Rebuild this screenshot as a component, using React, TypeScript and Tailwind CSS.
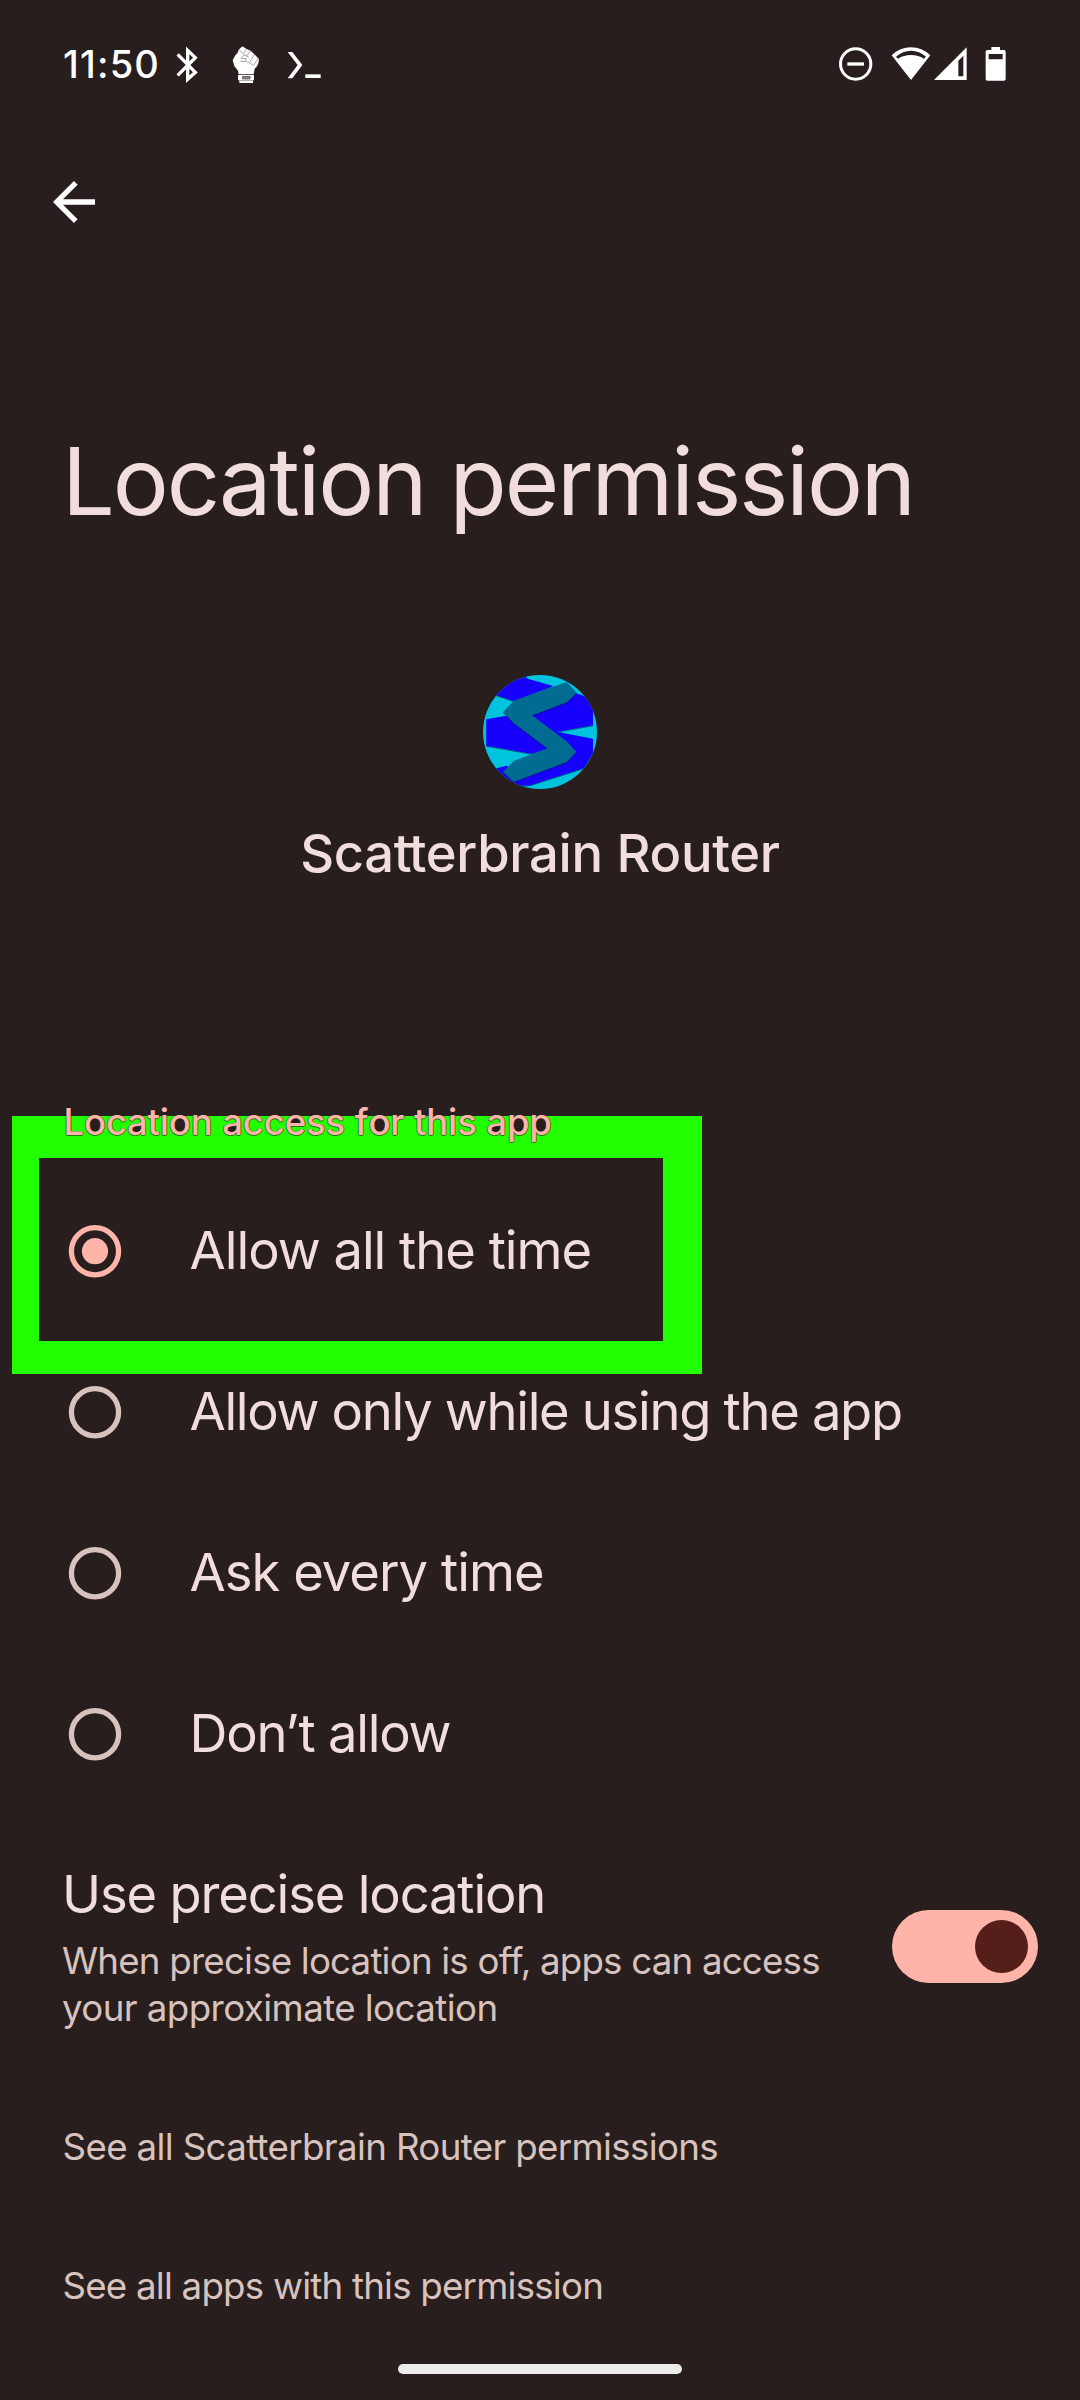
import React, { useState } from 'react';

function BluetoothIcon() {
  return (
    <svg width="24" height="40" viewBox="405 45 72 120" fill="none" stroke="#fff" strokeWidth="10">
      <path d="M413 73 L466 127 L443 148 V61 L466 83 L413 136" strokeLinejoin="miter" />
    </svg>
  );
}

function FistIcon() {
  return (
    <svg width="31" height="40" viewBox="60 27 93 120">
      <path
        d="M97 31 L110 39 L122 44 L133 55 L147 69 L145 82 L141 91 L134 98 L131 115 H86 L84 104 L73 90 L68 73 L75 59 L83 50 L86 41 Z"
        fill="#fff"
      />
      <path
        d="M88 43 L104 57 M110 38 L101 52 M122 44 L109 61 M134 54 L119 79 M145 67 L131 87 M103 56 L93 67 L109 68 L104 77 L90 75 M104 57 L116 63 M107 75 L121 82 L130 88"
        fill="none"
        stroke="#4a4241"
        strokeWidth="1.4"
      />
      <path d="M84 117 H132 V133 H129 V141 H88 V133 H84 Z" fill="#fff" />
      <path d="M88 133.5 H129" stroke="#8d8786" strokeWidth="2" />
      <rect x="98" y="121" width="22" height="8" fill="#8d8786" stroke="#4a4241" strokeWidth="2" />
    </svg>
  );
}

function TerminalIcon() {
  return (
    <svg width="39" height="40" viewBox="735 45 117 120">
      <path d="M743 66 H757 L787 105 L757 145 H743 L773 105 Z" fill="#fff" />
      <rect x="796" y="133" width="46" height="11" fill="#fff" />
    </svg>
  );
}

function DoNotDisturbIcon() {
  return (
    <svg width="36" height="40" viewBox="52 45 108 120">
      <circle cx="105" cy="102" r="45.5" fill="none" stroke="#fff" strokeWidth="9" />
      <rect x="80" y="97" width="50" height="10" fill="#fff" />
    </svg>
  );
}

function WifiIcon() {
  return (
    <svg width="42" height="40" viewBox="208 45 126 120">
      <path
        fillRule="evenodd"
        fill="#fff"
        d="M271 150 L213 76 Q238 52 271 52 Q304 52 329 76 Z M226 80 L232 86 Q249 75 271 75 Q293 75 310 86 L316 80 Q296 62 271 62 Q246 62 226 80 Z"
      />
    </svg>
  );
}

function SignalIcon() {
  return (
    <svg width="37" height="40" viewBox="334 45 111 120">
      <path
        fillRule="evenodd"
        fill="#fff"
        d="M340 150 L438 52 V150 Z M413 92 V139 H428 V77 Z"
      />
    </svg>
  );
}

function BatteryIcon() {
  return (
    <svg width="24" height="40" viewBox="490 45 72 120">
      <path
        fillRule="evenodd"
        fill="#fff"
        d="M512 51 H538 V60 H550 Q555 60 555 65 V147 Q555 152 550 152 H500 Q495 152 495 147 V65 Q495 60 500 60 H512 Z M504 72 V88 H546 V72 Z"
      />
    </svg>
  );
}

function BackArrow() {
  return (
    <svg width="42.3" height="42" viewBox="68 62 127 126">
      <path d="M68 125 L131 62 L142 73 L98 117 H195 V133 H98 L142 177 L131 188 Z" fill="#fff" />
    </svg>
  );
}

function AppLogo() {
  return (
    <svg width="114" height="114" viewBox="69 44 342 342">
      <defs>
        <clipPath id="disc">
          <circle cx="240" cy="215" r="171" />
        </clipPath>
        <filter id="soft" x="-5%" y="-5%" width="110%" height="110%">
          <feDropShadow dx="0" dy="3" stdDeviation="2" floodColor="#001a40" floodOpacity="0.6" />
        </filter>
      </defs>
      <g clipPath="url(#disc)">
        <rect x="69" y="44" width="342" height="342" fill="#00c4dd" />
        <g fill="#1800fb" filter="url(#soft)">
          <path d="M100 102 L180 40 L205 56 L280 77 L161 122 Z" />
          <path d="M79 177 L135 167 L200 180 L275 264 L215 280 L79 256 Z" />
          <path d="M210 165 L320 120 L346 98 L374 108 L399 140 V195 L290 214 Z" />
          <path d="M220 165 L290 214 L318 243 L262 264 L200 180 Z" />
          <path d="M290 214 L399 235 V278 L372 323 L210 375 L165 378 L104 325 L140 316 L180 350 L310 300 Z" />
        </g>
        <path
          fill="#006c92"
          filter="url(#soft)"
          d="M161 122 L320 65 L350 97 L320 126 L216 165 L320 243 L349 274 L320 305 L161 364 L129 334 L161 302 L262 264 L161 188 L129 155 Z"
        />
      </g>
    </svg>
  );
}

const counters: Record<string, string> = {
  o: 'relative before:absolute before:-z-10 before:rounded-full before:bg-[#271e1d] before:left-[14%] before:right-[14%] before:top-[0.46em] before:h-[0.47em]',
  p: 'relative before:absolute before:-z-10 before:rounded-full before:bg-[#271e1d] before:left-[18%] before:right-[12%] before:top-[0.46em] before:h-[0.47em]',
  a: 'relative before:absolute before:-z-10 before:rounded-full before:bg-[#271e1d] before:left-[15%] before:right-[22%] before:top-[0.7em] before:h-[0.23em]',
  e: 'relative before:absolute before:-z-10 before:rounded-full before:bg-[#271e1d] before:left-[15%] before:right-[15%] before:top-[0.47em] before:h-[0.23em]',
};

function SectionLabel({ text }: { text: string }) {
  return (
    <h2 className="relative z-10 h-11 pl-[63.5px] text-[36.5px] font-medium leading-[44px] tracking-[-0.13px] whitespace-nowrap text-[#ffb4a9] [text-shadow:1px_0_0_#271e1d99,0_1px_0_#271e1d99,-1px_0_0_#271e1d66]">
      {text.split('').map((ch, i) => (
        <span key={i} className={counters[ch]}>
          {ch}
        </span>
      ))}
    </h2>
  );
}

const options = [
  { label: 'Allow all the time', tracking: 'tracking-[-1px]' },
  { label: 'Allow only while using the app', tracking: 'tracking-[-1.3px]' },
  { label: 'Ask every time', tracking: 'tracking-[-0.96px]' },
  { label: 'Don’t allow', tracking: 'tracking-[-1.22px]' },
];

function Radio({ checked }: { checked: boolean }) {
  const color = checked ? '#ffb4a9' : '#d8c2be';
  return (
    <svg width="54" height="54" viewBox="0 0 54 54">
      <circle cx="27" cy="27.2" r="23.6" fill="none" stroke={color} strokeWidth="5.3" />
      {checked && <circle cx="27" cy="27.2" r="13.1" fill={color} />}
    </svg>
  );
}

export default function App() {
  const [selected, setSelected] = useState(0);
  const [precise, setPrecise] = useState(true);

  return (
    <div className="flex h-[2400px] w-[1080px] flex-col overflow-hidden bg-[#271e1d] font-[Inter,sans-serif] text-[#f1dedc]">
      <header className="flex h-[130px] shrink-0 items-center pr-[72px] pl-[63px]">
        <span className="w-[112px] pb-[3px] text-[38px] leading-[44px] font-medium tracking-[1.2px] text-white">11:50</span>
        <BluetoothIcon />
        <span className="ml-[31px]"><FistIcon /></span>
        <span className="ml-6"><TerminalIcon /></span>
        <div className="ml-auto flex items-center">
          <DoNotDisturbIcon />
          <span className="ml-4"><WifiIcon /></span>
          <SignalIcon />
          <span className="ml-[15px]"><BatteryIcon /></span>
        </div>
      </header>

      <nav className="flex h-[143px] shrink-0 items-center pl-[52.5px]">
        <button aria-label="Back"><BackArrow /></button>
      </nav>

      <h1 className="mt-[153px] h-[110px] pl-[62px] text-[93.5px] leading-[110px] font-normal tracking-[-2.12px] whitespace-nowrap">
        Location permission
      </h1>

      <section className="mt-[139px] flex flex-col items-center">
        <AppLogo />
        <p className="mt-8 h-16 text-[52.5px] leading-[64px] font-medium tracking-[-0.3px] whitespace-nowrap">
          Sca<span className="tracking-[-3px]">t</span>terbrain Router
        </p>
      </section>

      <section className="relative mt-[215px]">
        <SectionLabel text="Location access for this app" />
        <div className="pointer-events-none absolute top-4 left-3 h-[258px] w-[690px] border-t-[42px] border-r-[39px] border-b-[33px] border-l-[27px] border-[#22ff00]" />
        <ul className="mt-[26px]">
          {options.map((o, i) => (
            <li
              key={o.label}
              onClick={() => setSelected(i)}
              className="flex h-[161px] items-center gap-[67.5px] pl-[68px]"
            >
              <Radio checked={selected === i} />
              <span className={`pb-[2px] text-[52.5px] leading-[64px] whitespace-nowrap ${o.tracking}`}>{o.label}</span>
            </li>
          ))}
        </ul>
      </section>

      <section className="mt-12 flex items-center justify-between pr-[42px] pl-[62px]">
        <div>
          <h3 className="h-16 text-[52.5px] leading-[64px] tracking-[-1.15px] whitespace-nowrap">Use precise location</h3>
          <p className="mt-[11px] text-[36.7px] leading-[47px] whitespace-nowrap text-[#d8c2be]">
            <span className="tracking-[-0.8px]">When precise location is off, apps can access</span>
            <br />
            <span className="tracking-[-0.58px]">your approximate location</span>
          </p>
        </div>
        <button
          aria-label="Use precise location"
          onClick={() => setPrecise(!precise)}
          className={
            precise
              ? 'flex h-[73px] w-[146px] items-center justify-end rounded-full bg-[#ffb4a9] px-[10px]'
              : 'flex h-[73px] w-[146px] items-center justify-start rounded-full bg-[#534341] px-[10px]'
          }
        >
          <span className="size-[53px] rounded-full bg-[#561e18]" />
        </button>
      </section>

      <a className="mt-[92px] h-12 pl-[62.5px] text-[36.7px] leading-[48px] tracking-[-0.65px] whitespace-nowrap text-[#d8c2be]">
        See all Scatterbrain Router permissions
      </a>
      <a className="mt-[91px] h-12 pl-[62.5px] text-[36.7px] leading-[48px] tracking-[-0.78px] whitespace-nowrap text-[#d8c2be]">
        See all apps with this permission
      </a>

      <div className="mt-[54px] ml-[398px] h-[10px] w-[284px] rounded-[5px] bg-[#ececec]" />
    </div>
  );
}
